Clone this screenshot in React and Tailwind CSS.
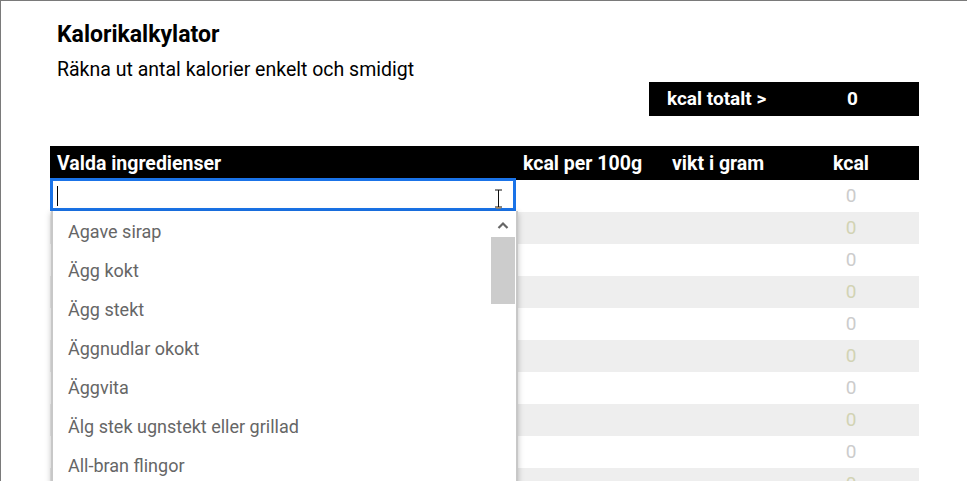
import React from "react";

const items = [
  "Agave sirap",
  "Ägg kokt",
  "Ägg stekt",
  "Äggnudlar okokt",
  "Äggvita",
  "Älg stek ugnstekt eller grillad",
  "All-bran flingor",
];

export default function App() {
  const rows = Array.from({ length: 10 });
  return (
    <div className="relative h-[481px] w-[967px] overflow-hidden border-l border-t border-[#7a7a7a] bg-white font-['Roboto','Liberation_Sans',sans-serif]">
      <div className="ml-[49px] w-[869px]">
        <div className="pl-[7px] pt-[21px]">
          <h1 className="text-[23px] font-bold leading-[25px] text-black">Kalorikalkylator</h1>
          <p className="mt-[11px] text-[19.5px] leading-[24px] text-black">Räkna ut antal kalorier enkelt och smidigt</p>
        </div>
        <div className="flex justify-end">
          <div className="grid h-[34px] w-[270px] grid-cols-[185px_85px] items-center bg-black text-[19px] font-bold text-white">
            <span className="pl-[18px]">kcal totalt &gt;</span>
            <span className="pl-[13px]">0</span>
          </div>
        </div>
        <div className="mt-[30px] grid h-[34px] grid-cols-[466px_149px_118px_136px] items-center bg-black pt-[2px] text-[19.5px] font-bold text-white">
          <span className="pl-[7px]">Valda ingredienser</span>
          <span className="pl-[7px]">kcal per 100g</span>
          <span className="pl-[7px]">vikt i gram</span>
          <span className="text-center">kcal</span>
        </div>
        <div>
          {rows.map((_, i) => (
            <div
              key={i}
              className={`grid h-[32px] grid-cols-[466px_149px_118px_136px] items-center ${i % 2 === 1 ? "bg-[#eeeeee]" : "bg-white"}`}
            >
              {i === 0 ? (
                <div className="relative -mt-[2px] h-[33px] self-start border-[3px] border-solid border-[#1a73e8] bg-white">
                  <span className="absolute left-[4px] top-[5px] h-[20px] w-px bg-black" />
                  <svg className="absolute left-[441px] top-[8px]" width="9" height="20" viewBox="0 0 9 20">
                    <path d="M1 1h7M4.5 1v17M1 18h7" stroke="#111" strokeWidth="1" fill="none" />
                    <path d="M2 19h5" stroke="#d08a2a" strokeWidth="1" />
                  </svg>
                </div>
              ) : (
                <div />
              )}
              <div />
              <div />
              <div className={`text-center text-[19px] ${i % 2 === 1 ? "text-[#d2d3b4]" : "text-[#cccccc]"}`}>0</div>
            </div>
          ))}
        </div>
      </div>

      {/* dropdown */}
      <div className="absolute left-[50px] top-[210px] h-[300px] w-[467px] border-x-2 border-[#c8c8c8] bg-white shadow-[0_2px_6px_rgba(0,0,0,0.25)]">
        <div className="pt-[1px]">
          {items.map((t) => (
            <div key={t} className="flex h-[39px] items-center pl-[15px] text-[18px] text-[#666666]">
              {t}
            </div>
          ))}
        </div>
        <div className="absolute right-[1px] top-0 flex w-[24px] flex-col items-center">
          <svg className="mt-[10px]" width="12" height="8" viewBox="0 0 12 8">
            <path d="M1.5 7L6 2.5 10.5 7" stroke="#666" strokeWidth="2.2" fill="none" />
          </svg>
          <div className="mt-[8px] h-[67px] w-[24px] bg-[#cccccc]" />
        </div>
      </div>
    </div>
  );
}
